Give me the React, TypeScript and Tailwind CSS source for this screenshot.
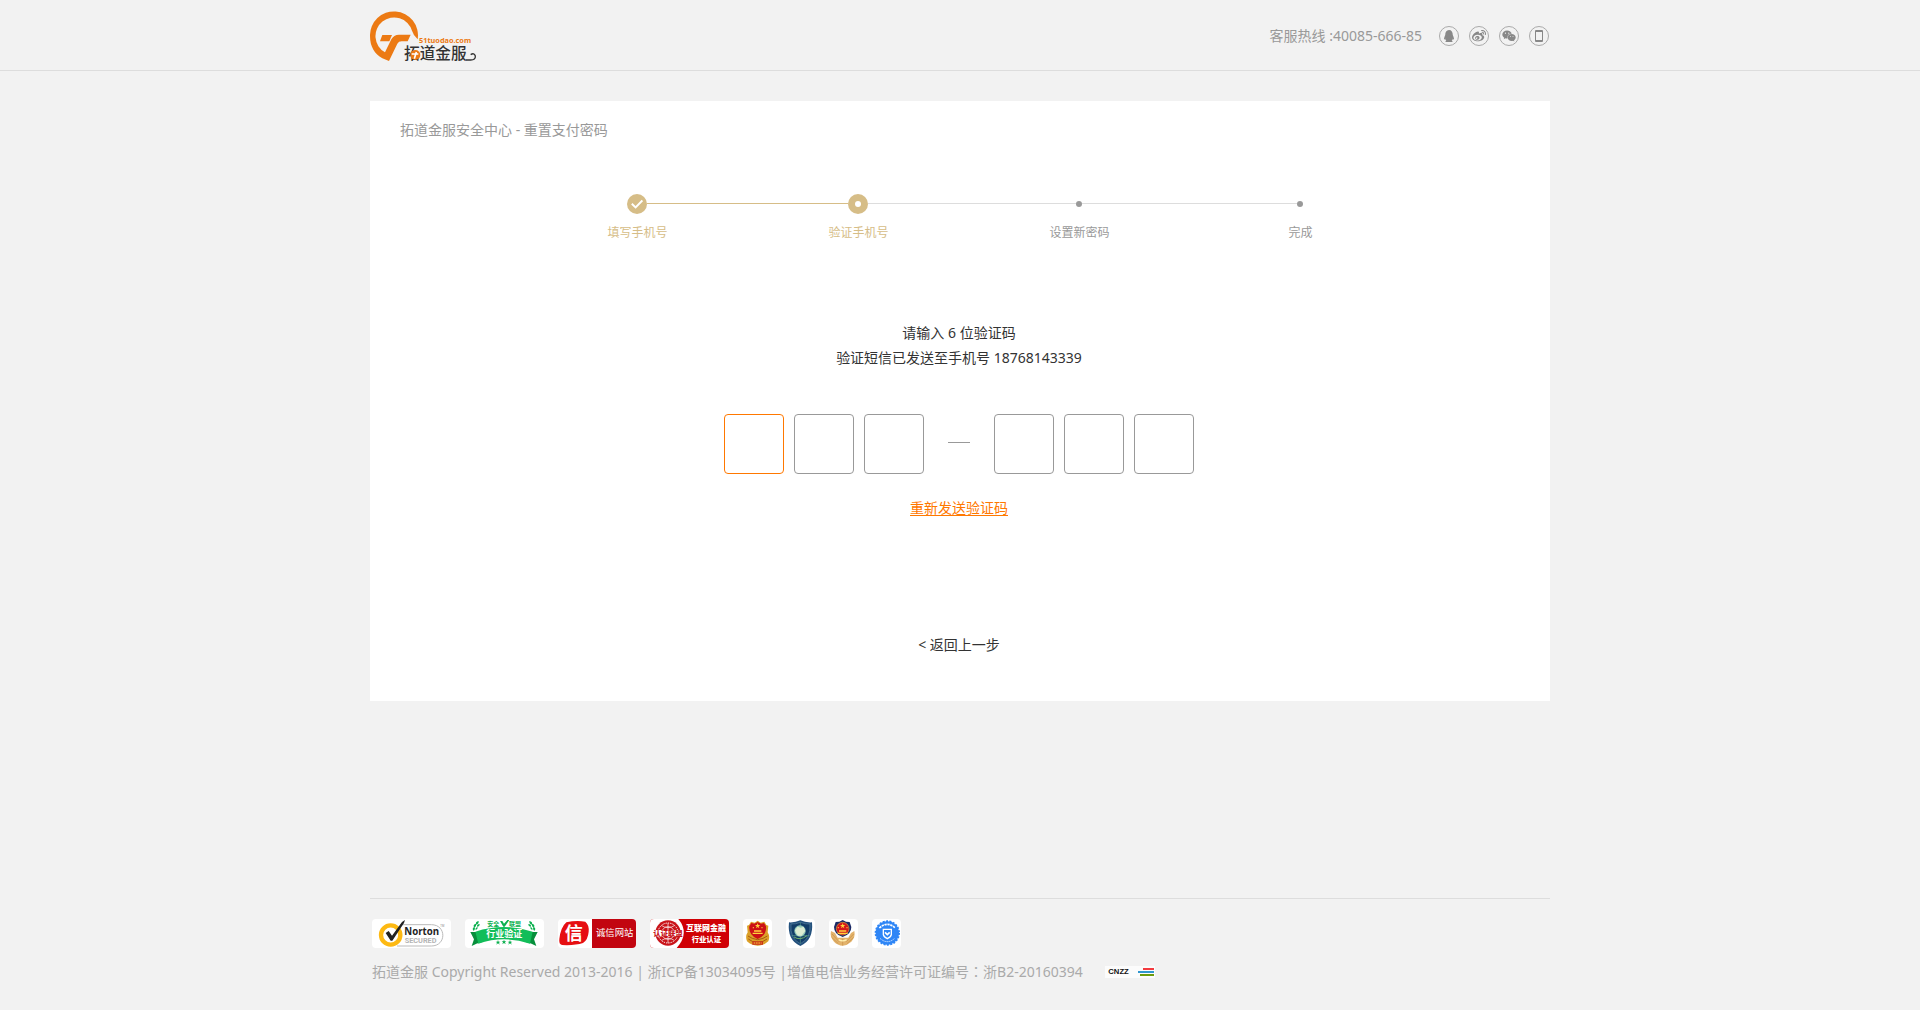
import React, { useState } from "react";
import { FaQq, FaWeibo, FaWeixin } from "react-icons/fa";

const CJK = "'Noto Sans','Noto Sans CJK SC',sans-serif";

function Logo() {
  return (
    <svg className="h-[60px] w-[107px]" viewBox="60 15 321 180" role="img" aria-label="拓道金服">
      <path
        fill="#ec7a14"
        d="M203 118 A72 72 0 1 0 60 108 C60 140 74 162 97 175 L117 183 L142 131 Q146 124 155 124 L173 124 L182 104 L147 104 Q131 104 124 118 L105 157 A56 56 0 1 1 186 92 Q190 106 203 118Z"
      />
      <path fill="#ec7a14" d="M97 105H126L118 124H90Z" />
      <text x="207" y="128" fontSize="22" fontWeight="700" fill="#ec7a14" fontFamily="'Noto Sans'">
        51tuodao.com
      </text>
      <text x="162" y="178" fontSize="47" fontWeight="500" fill="#333" fontFamily="'Noto Sans CJK SC'">
        拓道金服
      </text>
      <path d="M348 180H362Q377 180 376 168Q372 157 362 164" fill="none" stroke="#333" strokeWidth="4" />
      <circle cx="196" cy="165" r="15" fill="#ec7a14" />
      <path d="M185 162H205M199 156L193 176" stroke="#fff" strokeWidth="5" fill="none" />
    </svg>
  );
}

function PhoneIcon() {
  return (
    <svg className="h-3 w-2" viewBox="0 0 8 12" aria-hidden="true">
      <rect width="8" height="12" rx="1" fill="#888" />
      <rect x="1" y="2" width="6" height="8" fill="#f2f2f2" />
    </svg>
  );
}

const socials = [
  { label: "QQ", icon: <FaQq size={12} /> },
  { label: "微博", icon: <FaWeibo size={14} /> },
  { label: "微信", icon: <FaWeixin size={14} /> },
  { label: "手机客户端", icon: <PhoneIcon /> },
];

const steps = [
  { label: "填写手机号", state: "done" },
  { label: "验证手机号", state: "current" },
  { label: "设置新密码", state: "todo" },
  { label: "完成", state: "todo" },
];

function Marker({ state }: { state: string }) {
  if (state === "todo") return <span className="size-1.5 rounded-full bg-[#999]" />;
  return (
    <span className="flex size-5 items-center justify-center rounded-full bg-[#d6bd87]">
      {state === "done" ? (
        <svg className="size-3" viewBox="0 0 12 12" aria-hidden="true">
          <path d="M0.8 5.8L4.6 9.4L11.4 2.4" fill="none" stroke="#fff" strokeWidth="2" />
        </svg>
      ) : (
        <span className="size-1.5 rounded-full bg-white" />
      )}
    </span>
  );
}

function Steps() {
  const lines = ["bg-transparent", "bg-[#d6bd87]", "bg-[#ddd]", "bg-[#ddd]", "bg-transparent"];
  return (
    <ol className="mx-auto grid w-[884px] max-w-full grid-cols-4">
      {steps.map((s, i) => (
        <li key={s.label} className="flex flex-col items-center">
          <div className="flex h-5 w-full items-center">
            <span className={`mb-px h-px flex-1 ${lines[i]}`} />
            <Marker state={s.state} />
            <span className={`mb-px h-px flex-1 ${lines[i + 1]}`} />
          </div>
          <span className={`mt-[9px] pl-0.5 text-xs leading-5 ${s.state === "todo" ? "text-[#999]" : "text-[#d6bd87]"}`}>
            {s.label}
          </span>
        </li>
      ))}
    </ol>
  );
}

function CodeInputs() {
  const [code, setCode] = useState<string[]>(["", "", "", "", "", ""]);
  const box = (i: number) => (
    <input
      key={i}
      aria-label={`验证码第 ${i + 1} 位`}
      inputMode="numeric"
      maxLength={1}
      value={code[i]}
      onChange={(e) => setCode(code.map((c, j) => (j === i ? e.target.value : c)))}
      className={`size-[60px] rounded border bg-white text-center text-2xl outline-none focus:border-[#ff7800] ${
        i === 0 ? "border-[#ff7800]" : "border-[#999]"
      }`}
    />
  );
  return (
    <div className="flex items-center justify-center">
      <div className="flex gap-2.5">{[0, 1, 2].map(box)}</div>
      <span className="mx-6 mb-[3px] h-px w-[22px] bg-[#999]" />
      <div className="flex gap-2.5">{[3, 4, 5].map(box)}</div>
    </div>
  );
}

function Norton() {
  return (
    <svg className="h-[29px] w-[79px] rounded bg-white" viewBox="0 0 237 87" role="img" aria-label="Norton Secured">
      <path d="M85 17H178C224 17 224 81 178 81H75" fill="none" stroke="#bbb" strokeWidth="3" />
      <circle cx="56" cy="48" r="29" fill="#fff" stroke="#fdb913" strokeWidth="13" />
      <path d="M41 42L50 36L60 50L90 9L99 3L96 12L61 65L56 65Z" fill="#222" />
      <text x="97" y="49" fontSize="29" fontWeight="700" fill="#222" fontFamily="'Open Sans'">Norton</text>
      <text x="98" y="72" fontSize="22" fontWeight="700" fill="#b5b5b5" fontFamily="Roboto">SECURED</text>
      <text x="205" y="23" fontSize="8" fill="#888" fontFamily="Roboto">TM</text>
    </svg>
  );
}

function Laurel() {
  return (
    <path
      d="M41 6Q30 8 33 17Q42 15 41 6ZM33 14Q23 16 27 25Q35 23 33 14ZM29 23Q20 26 25 35Q32 32 29 23ZM44 15Q35 15 36 23Q44 23 44 15ZM38 24Q30 26 32 33Q39 31 38 24Z"
      fill="#0cb04f"
    />
  );
}

function IndustryCheck() {
  const star = "M0 -7L2 -2L7 -2L3 1L5 7L0 3L-5 7L-3 1L-7 -2L-2 -2Z";
  return (
    <svg className="h-[29px] w-[79px] rounded bg-white" viewBox="0 0 237 87" role="img" aria-label="安全联盟行业验证">
      <Laurel />
      <g transform="translate(234 0) scale(-1 1)"><Laurel /></g>
      <path d="M16 39L45 39L52 69Q36 72 20 81L27 61Z M218 39L189 39L182 69Q198 72 214 81L207 61Z" fill="#078f3c" />
      <path d="M31 38Q117 10 203 38L195 74Q117 48 40 74Z" fill="#12bd59" />
      <text x="67" y="20" fontSize="18" fontWeight="700" fill="#0cb04f" fontFamily={CJK}>安全</text>
      <path d="M105 6L112 6L117 14L127 3L133 3L119 23L115 23Z" fill="#0cb04f" />
      <text x="132" y="20" fontSize="18" fontWeight="700" fill="#0cb04f" fontFamily={CJK}>联盟</text>
      <text x="64" y="53" fontSize="27" fontWeight="700" fill="#fff" fontFamily={CJK}>行业验证</text>
      <g fill="#0cb04f">
        <path d={star} transform="translate(99 70)" />
        <path d={star} transform="translate(117 69)" />
        <path d={star} transform="translate(135 70)" />
      </g>
    </svg>
  );
}

function HonestSite() {
  return (
    <svg className="h-[29px] w-[78px] rounded bg-white" viewBox="0 0 234 87" role="img" aria-label="诚信网站">
      <rect x="102" width="132" height="87" fill="#c20510" />
      <path d="M25 10Q55 3 82 8Q94 18 92 38Q90 62 75 72Q50 80 12 78Q2 76 4 60Q8 25 25 10Z" fill="#e60f12" />
      <text x="20" y="62" fontSize="54" fontWeight="700" fill="#fff" fontFamily={CJK}>信</text>
      <text x="114" y="51" fontSize="28" fill="#fff" fontFamily={CJK}>诚信网站</text>
    </svg>
  );
}

function FinanceCert() {
  return (
    <svg className="h-[29px] w-[79px] rounded bg-[#d00005]" viewBox="0 0 237 87" role="img" aria-label="互联网金融行业认证">
      <path d="M0 0H85Q120 42 80 87H0Z" fill="#fff" />
      <circle cx="54" cy="42" r="38" fill="#c9151b" />
      <circle cx="54" cy="42" r="30" fill="none" stroke="#fff" strokeWidth="3" strokeDasharray="4 3" />
      <circle cx="54" cy="42" r="19" fill="none" stroke="#fff" strokeWidth="2" />
      <path d="M54 12V72M35 20Q54 32 73 20M35 64Q54 52 73 64" stroke="#fff" strokeWidth="2" fill="none" />
      <rect x="9" y="33" width="90" height="20" fill="#fff" />
      <text x="10" y="51" fontSize="22" fontWeight="900" fill="#c9151b" fontFamily={CJK}>认证联盟</text>
      <text x="108" y="37" fontSize="24" fontWeight="900" fill="#fff" fontFamily={CJK}>互联网金融</text>
      <text x="125" y="68" fontSize="22" fontWeight="900" fill="#fff" fontFamily={CJK}>行业认证</text>
    </svg>
  );
}

function GoldStars() {
  return (
    <g fill="#ffd23c">
      <path d="M44 12L46 18H52L47 22L49 28L44 24L39 28L41 22L36 18H42Z" />
      <circle cx="31" cy="26" r="2" />
      <circle cx="57" cy="26" r="2" />
      <path d="M33 34H55V38H33ZM29 41H59V45H29Z" />
    </g>
  );
}

function CommerceBadge() {
  return (
    <svg className="size-[29px] rounded bg-white" viewBox="0 0 87 87" role="img" aria-label="工商网监">
      <path d="M44 5L53 11L64 8L70 18L76 20L74 40Q82 52 76 67Q62 80 44 80Q26 80 12 67Q6 52 14 40L12 20L18 18L24 8L35 11Z" fill="#dca028" />
      <path d="M44 9L54 14L63 12L69 22Q72 48 44 60Q16 48 19 22L25 12L34 14Z" fill="#cc1016" />
      <GoldStars />
      <path d="M15 51Q27 60 44 62Q61 60 73 51M16 60Q28 70 44 71Q60 70 72 60" fill="none" stroke="#a65a12" strokeWidth="3" />
      <path d="M28 67H60V77H28Z" fill="#c9301a" />
      <path d="M32 72H56" stroke="#ffd23c" strokeWidth="3" strokeDasharray="5 2" />
    </svg>
  );
}

function ShieldBadge() {
  return (
    <svg className="size-[29px] rounded bg-white" viewBox="0 0 87 87" role="img" aria-label="网络安全">
      <path d="M9 10Q28 11 43 4Q58 11 78 10Q83 64 43 81Q3 64 9 10Z" fill="#24517d" />
      <path d="M15 15Q29 16 43 10Q57 16 72 15Q75 59 43 74Q11 59 15 15Z" fill="#123d68" stroke="#6a94ad" strokeWidth="1.5" />
      <path d="M43 10V74M17 50H70" stroke="#559a8c" strokeWidth="2" />
      <circle cx="42" cy="36" r="17" fill="#93c9b8" />
      <path d="M27 34L35 23L44 26L53 23L58 36L53 42L47 50L36 50L30 42Z" fill="#dcecd2" />
      <path d="M24 54Q42 66 63 50" fill="none" stroke="#6fae6b" strokeWidth="3" />
    </svg>
  );
}

function PoliceBadge() {
  return (
    <svg className="size-[29px] rounded bg-white" viewBox="0 0 87 87" role="img" aria-label="网络警察">
      <path d="M6 36L18 42L26 56H58L66 42L76 36Q80 54 67 68Q55 79 41 80Q26 79 15 68Q2 54 6 36Z" fill="#e3b36c" />
      <path d="M9 45L30 68M8 55L28 74M74 45L52 68M74 55L54 74M41 60V80" stroke="#bd843c" strokeWidth="1.5" />
      <path d="M41 3L51 8L62 9L67 24Q67 46 41 54Q15 46 15 24L20 9L31 8Z" fill="#1b2a66" />
      <circle cx="41" cy="29" r="19" fill="#d4161c" stroke="#d9a63d" strokeWidth="2" />
      <g transform="translate(-3 0)"><GoldStars /></g>
      <path d="M29 62Q41 69 53 62" fill="none" stroke="#fff0b0" strokeWidth="4" />
    </svg>
  );
}

function VerifiedBadge() {
  return (
    <svg className="size-[29px] rounded bg-white" viewBox="0 0 87 87" role="img" aria-label="可信网站">
      <circle cx="46" cy="42" r="35" fill="#2f86f6" />
      <circle cx="46" cy="42" r="35" fill="none" stroke="#2f86f6" strokeWidth="6" strokeDasharray="6 4" />
      <path d="M22 27Q46 5 70 27" fill="none" stroke="#fff" strokeWidth="5" strokeDasharray="7 2" />
      <path d="M24 58Q46 78 68 58" fill="none" stroke="#cfe3ff" strokeWidth="3" strokeDasharray="4 2" />
      <path d="M34 31H58V47Q57 54 46 59Q35 54 34 47Z" fill="none" stroke="#fff" strokeWidth="4" />
      <path d="M39 40L46 47L53 40" fill="none" stroke="#fff" strokeWidth="5" />
    </svg>
  );
}

function Cnzz() {
  return (
    <svg className="h-3 w-[50px] bg-white/80" viewBox="0 0 150 36" role="img" aria-label="CNZZ">
      <text x="10" y="24" fontSize="23" fontWeight="700" fill="#111" fontFamily="'Liberation Sans'">CNZZ</text>
      <path d="M114 6H147V12H114Z" fill="#f33a3f" />
      <path d="M99 15H147V21H99Z" fill="#2f97d0" />
      <path d="M105 24H147V30H105Z" fill="#6c9c0e" />
    </svg>
  );
}

export default function App() {
  return (
    <div className="flex min-h-screen flex-col bg-[#f2f2f2] font-['Noto_Sans','Noto_Sans_CJK_SC',sans-serif] text-sm text-[#333]">
      <header className="border-b border-[#ddd]">
        <div className="mx-auto flex h-[70px] w-full max-w-[1180px] items-center justify-between">
          <a href="#home" className="block">
            <Logo />
          </a>
          <div className="flex items-center gap-[17px] pt-0.5 pr-px text-[#999]">
            <span>客服热线 :40085-666-85</span>
            <ul className="flex gap-2.5">
              {socials.map((s) => (
                <li key={s.label}>
                  <a
                    href="#contact"
                    aria-label={s.label}
                    className="flex size-5 items-center justify-center rounded-full border border-[#aaa] text-[#888]"
                  >
                    {s.icon}
                  </a>
                </li>
              ))}
            </ul>
          </div>
        </div>
      </header>

      <main className="mx-auto mt-[30px] w-full max-w-[1180px] bg-white pb-[46px]">
        <h1 className="px-[30px] pt-[19px] leading-5 text-[#999]">拓道金服安全中心 - 重置支付密码</h1>
        <div className="mt-[54px] pl-4">
          <Steps />
        </div>
        <form className="mt-[77px] flex flex-col items-center pr-0.5" onSubmit={(e) => e.preventDefault()}>
          <p className="text-center leading-[25px]">
            请输入 6 位验证码
            <br />
            验证短信已发送至手机号 18768143339
          </p>
          <div className="mt-11">
            <CodeInputs />
          </div>
          <button type="button" className="mt-6 cursor-pointer leading-5 text-[#ff7800] underline underline-offset-2">
            重新发送验证码
          </button>
          <a href="#back" className="mt-[117px] leading-5">
            &lt; 返回上一步
          </a>
        </form>
      </main>

      <footer className="mx-auto mt-auto w-full max-w-[1180px] border-t border-[#ddd] px-0.5 pt-5 pb-7">
        <div className="flex items-center gap-3.5">
          <Norton />
          <IndustryCheck />
          <HonestSite />
          <FinanceCert />
          <CommerceBadge />
          <ShieldBadge />
          <PoliceBadge />
          <VerifiedBadge />
        </div>
        <div className="mt-3.5 flex items-center gap-[22px] leading-5 text-[#aaa]">
          <p>
            拓道金服 Copyright Reserved 2013-2016 | 浙ICP备13034095号 |增值电信业务经营许可证编号
            <span className="font-['Noto_Sans_CJK_TC'] leading-none">：</span>浙B2-20160394
          </p>
          <Cnzz />
        </div>
      </footer>
    </div>
  );
}
